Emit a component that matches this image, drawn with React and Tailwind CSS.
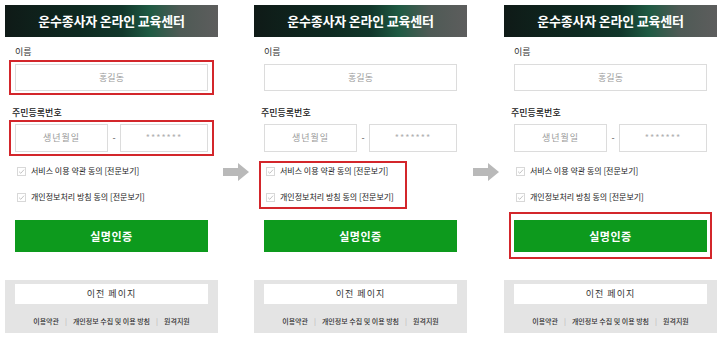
const font = {
  fontFamily: '"Noto Sans CJK KR", "Noto Sans", sans-serif',
};

/* ================= PIECES ================= */

function Header() {
  return (
    <div className="flex h-[32px] items-center justify-center bg-[linear-gradient(90deg,#0f1a17_0%,#0e2a21_35%,#12372b_55%,#1f5a43_68%,#4e5a55_82%,#5d5d5d_100%)]">
      <span className="text-[13px] font-bold tracking-[-0.2px] text-white">
        운수종사자 온라인 교육센터
      </span>
    </div>
  );
}

function Box({ on, className = "", children }) {
  return (
    <div
      className={`border-2 ${
        on ? "border-[#d3262b]" : "border-transparent"
      } ${className}`}
    >
      {children}
    </div>
  );
}

function Input({ text, className = "" }) {
  return (
    <div
      className={`flex items-center justify-center border border-[#dcdcdc] bg-white text-[9px] text-[#9a9a9a] ${className}`}
    >
      {text}
    </div>
  );
}

function CheckRow({ label }) {
  return (
    <div className="flex h-[16px] items-center gap-[5px]">
      <span className="flex h-[9px] w-[9px] items-center justify-center border border-[#d8d8d8] bg-white">
        <svg viewBox="0 0 10 10" className="h-[7px] w-[7px]">
          <path
            d="M1.5 5.2 L4 7.6 L8.6 2.4"
            fill="none"
            stroke="#c4c4c4"
            strokeWidth="1.4"
          />
        </svg>
      </span>
      <span className="text-[8px] leading-none text-[#222]">{label}</span>
    </div>
  );
}

function Panel({ step }) {
  return (
    <div className="flex w-[213px] flex-col">
      <Header />

      {/* ===== 이름 ===== */}
      <div className="mt-[8px] h-[14px] pl-[10px] text-[9px] leading-[14px] text-[#333]">
        이름
      </div>
      <Box on={step === 1} className="mx-[4px] mt-[1px] p-[2px]">
        <Input text="홍길동" className="h-[27px] mx-[2px]" />
      </Box>

      {/* ===== 주민등록번호 ===== */}
      <div className="mt-[11px] h-[14px] pl-[7px] text-[9px] font-medium leading-[14px] text-[#222]">
        주민등록번호
      </div>
      <Box on={step === 1} className="mx-[4px] p-[2px]">
        <div className="mx-[2px] flex h-[28px] items-center">
          <Input
            text="생년월일"
            className="h-full w-[93px] tracking-[1px]"
          />
          <span className="w-[12px] text-center text-[9px] text-[#555]">-</span>
          <Input
            text="*******"
            className="h-full flex-1 text-[6px] tracking-[1px] text-[#b0b0b0]"
          />
        </div>
      </Box>

      {/* ===== 약관 ===== */}
      <Box
        on={step === 2}
        className="ml-[5px] mt-[5px] flex w-[148px] flex-col gap-[10px] pb-[2px] pl-[5px]"
      >
        <CheckRow label="서비스 이용 약관 동의 [전문보기]" />
        <CheckRow label="개인정보처리 방침 동의 [전문보기]" />
      </Box>

      {/* ===== 실명인증 ===== */}
      <Box
        on={step === 3}
        className="mx-[5px] mt-[3px] px-[3px] pb-[5px] pt-[6px]"
      >
        <div className="flex h-[32px] items-center justify-center bg-[#0d9a1d] text-[11px] font-bold tracking-[0.5px] text-white">
          실명인증
        </div>
      </Box>

      {/* ===== FOOTER ===== */}
      <div className="mt-[21px] flex h-[53px] flex-col bg-[#e4e4e4] px-[10px] pt-[4px]">
        <div className="flex h-[20px] items-center justify-center bg-white text-[9px] tracking-[1px] text-[#333]">
          이전 페이지
        </div>
        <div className="mt-[12px] flex items-center justify-center text-[7px] font-medium text-[#333]">
          <span>이용약관</span>
          <span className="mx-[6px] text-[#bbb]">|</span>
          <span>개인정보 수집 및 이용 방침</span>
          <span className="mx-[6px] text-[#bbb]">|</span>
          <span>원격지원</span>
        </div>
      </div>
    </div>
  );
}

function Arrow() {
  return (
    <svg viewBox="0 0 26 18" className="mt-[158px] h-[18px] w-[26px] shrink-0">
      <path d="M0 5 H15 V0 L26 9 L15 18 V13 H0 Z" fill="#b9b9b9" />
    </svg>
  );
}

/* ================= PAGE ================= */

export default function App() {
  return (
    <div
      className="flex h-[339px] w-[720px] items-start bg-white pl-[5px] pt-[5px]"
      style={font}
    >
      <Panel step={1} />
      <div className="mx-[5px] flex">
        <Arrow />
      </div>
      <Panel step={2} />
      <div className="ml-[6px] mr-[5px] flex">
        <Arrow />
      </div>
      <Panel step={3} />
    </div>
  );
}
